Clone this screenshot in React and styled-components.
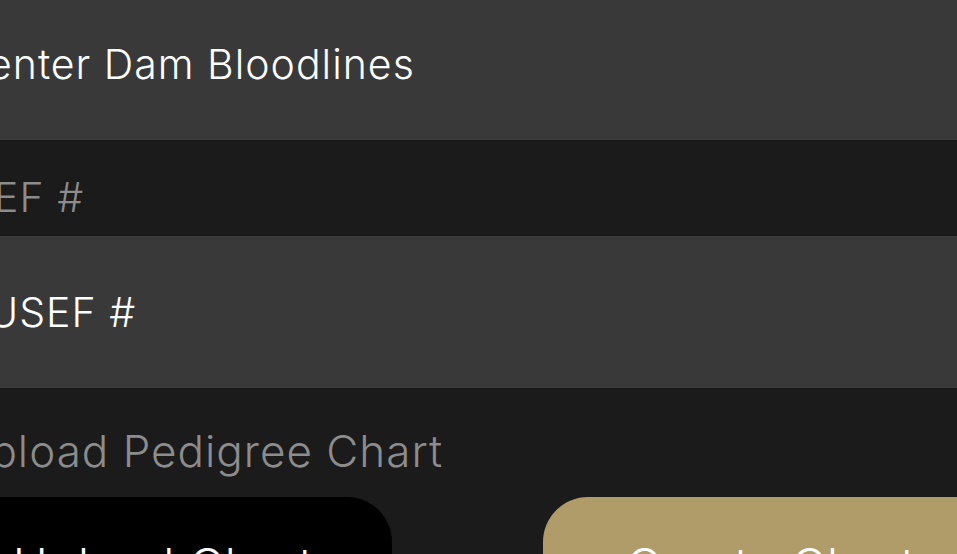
import React from "react";
import styled, { createGlobalStyle } from "styled-components";

const Global = createGlobalStyle`
  html, body { margin: 0; padding: 0; background: #1b1b1b; overflow: hidden; }
  body { font-family: Inter, "Noto Sans", sans-serif; }
  #root { width: 957px; height: 554px; overflow: hidden; }
`;

const Form = styled.div`
  width: 1065px;
  margin-left: -65px;
  margin-top: -12px;
  display: flex;
  flex-direction: column;
`;

const Input = styled.input`
  box-sizing: border-box;
  display: block;
  width: 100%;
  height: 152px;
  border: none;
  outline: none;
  margin: 0;
  background: #393939;
  color: #ffffff;
  font-family: Inter, "Noto Sans", sans-serif;
  font-size: 41px;
  font-weight: 300;
  letter-spacing: 1px;
  padding: 0 0 0 53px;
  &::placeholder { color: #ffffff; opacity: 1; }
`;

const Label = styled.label`
  display: block;
  color: #8c8c8c;
  font-size: ${(p) => p.$size}px;
  font-weight: 300;
  line-height: 50px;
  letter-spacing: 1px;
  margin: ${(p) => p.$top}px 0 ${(p) => p.$bottom}px ${(p) => p.$indent}px;
`;

const Buttons = styled.div`
  display: grid;
  grid-template-columns: 457px 457px;
  column-gap: 151px;
`;

const Button = styled.button`
  box-sizing: border-box;
  height: 130px;
  border: none;
  border-radius: 45px;
  background: ${(p) => (p.$gold ? "#b09c68" : "#000000")};
  color: #ffffff;
  font-family: Inter, "Noto Sans", sans-serif;
  font-size: 47px;
  font-weight: 300;
  line-height: 56px;
  letter-spacing: 1px;
  padding: 40px 0 0;
  display: flex;
  justify-content: center;
  align-items: flex-start;
`;

export default function App() {
  return (
    <>
      <Global />
      <Form>
        <Input placeholder="enter Dam Bloodlines" />
        <Label $size={41} $top={32} $bottom={14} $indent={1}>USEF #</Label>
        <Input placeholder="USEF #" />
        <Label $size={44} $top={38} $bottom={21} $indent={22}>Upload Pedigree Chart</Label>
        <Buttons>
          <Button>Upload Chart</Button>
          <Button $gold>Create Chart</Button>
        </Buttons>
      </Form>
    </>
  );
}
